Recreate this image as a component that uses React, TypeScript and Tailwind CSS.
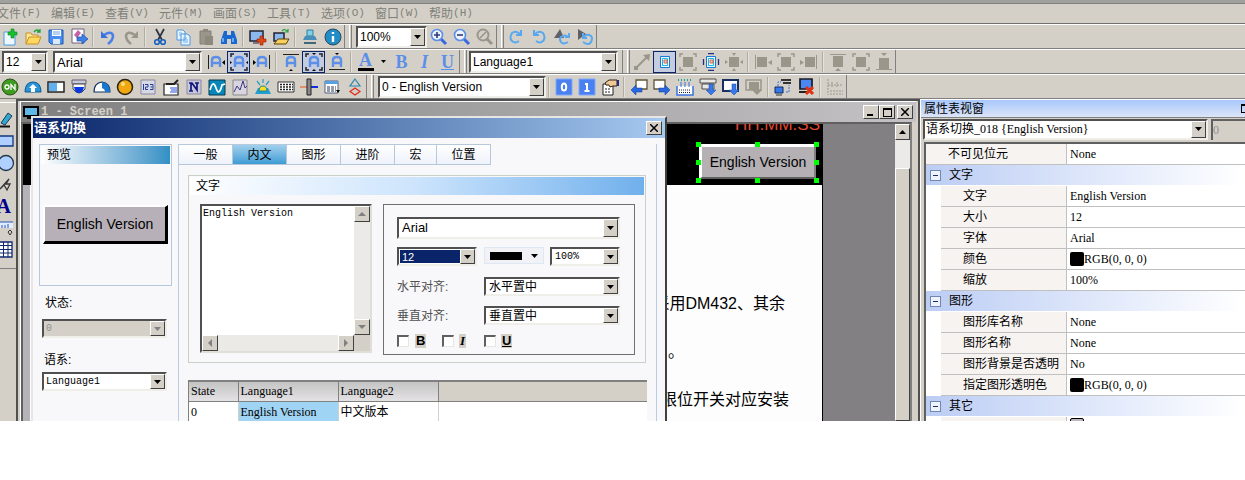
import { useState, type ReactNode } from 'react';

const SUNKEN = 'border-t-2 border-l-2 border-r border-b border-t-[#606060] border-l-[#606060] border-r-[#e8e6e0] border-b-[#e8e6e0]';
const RAISED = 'border border-t-white border-l-white border-r-[#404040] border-b-[#404040] bg-[#d4d0c8]';

const BLUE = '#5b8fe8';
const GREY = '#9a968a';

const corners = (c: string) => (
  <path d="M1 4V1h3M14 1h3v3M17 14v3h-3M4 17H1v-3" fill="none" stroke={c} strokeWidth="1.5" />
);
const letterA = (
  <path d="M5 14V7q0-3 4-3t4 3v7M5 10h8" fill="none" stroke={BLUE} strokeWidth="2.4" />
);
const page = (
  <>
    <path d="M4.500 3.500h9v11h-9z" fill="#e8f8ff" stroke="#1878d8" />
    <path d="M6.500 5.500h5v7h-5z" fill="#fff" stroke="#18b8e8" />
    <path d="M8 7h3v3H8z" fill="#f8c8b0" stroke="#e06040" />
  </>
);

// every drawing uses an 18x18 box
const ICONS: Record<string, ReactNode> = {
  new: (
    <>
      <path d="M3 4h11v13H3z" fill="#eef6ff" stroke="#4aa0d8" />
      <path d="M10 1h3v3h3v3h-3v3h-3V7H7V4h3z" fill="#18c030" stroke="#0a8a20" strokeWidth=".6" />
    </>
  ),
  open: (
    <>
      <path d="M2 16V5h5l1 2h6v2" fill="#ffe9a0" stroke="#c89020" />
      <path d="M2 16l3-7h12l-3 7z" fill="#ffd860" stroke="#c89020" />
      <path d="M10 4q3-4 6 0M16 1v3h-3" fill="none" stroke="#20a040" strokeWidth="1.3" />
    </>
  ),
  save: (
    <>
      <path d="M2 2h14v14H4l-2-2z" fill="#4a8cf0" stroke="#1858b8" />
      <path d="M5 2h9v6H5z" fill="#fff" />
      <path d="M6 4h7M6 6h7" stroke="#70a0e0" />
      <path d="M6 11h7v5H6z" fill="#d8e8ff" />
    </>
  ),
  saveAs: (
    <>
      <path d="M2 1h12v14H2z" fill="#fff" stroke="#706080" />
      <path d="M4 7l4-5 3 3-4 5z" fill="#c860a8" />
      <path d="M7 9h5V6l6 5-6 5v-3H7z" fill="#3f80e8" stroke="#1c4ca0" strokeWidth=".7" />
    </>
  ),
  undo: (
    <>
      <path d="M5 7q8-5 9 1 0 4-5 8" fill="none" stroke="#4a80e8" strokeWidth="2.600" />
      <path d="M2 3v7h7z" fill="#3a70e0" />
    </>
  ),
  redo: (
    <>
      <path d="M13 7q-8-5-9 1 0 4 5 8" fill="none" stroke={GREY} strokeWidth="2.600" />
      <path d="M16 3v7H9z" fill={GREY} />
    </>
  ),
  cut: (
    <>
      <path d="M5 1l6 11M13 1L7 12" stroke="#303848" strokeWidth="1.8" />
      <circle cx="6" cy="14" r="2.300" fill="none" stroke="#1860c0" strokeWidth="1.6" />
      <circle cx="12" cy="14" r="2.300" fill="none" stroke="#1860c0" strokeWidth="1.6" />
    </>
  ),
  copy: (
    <>
      <path d="M3 2h6l2 2v8H3zM7 6h6l3 2v9H7z" fill="#eaf4ff" stroke="#4a98e0" />
      <path d="M5 5h3M5 7h2M9 10h4M9 12h5M9 14h5" stroke="#70b0f0" />
    </>
  ),
  paste: (
    <>
      <path d="M3 3h11v13H3z" fill={GREY} stroke="#858074" />
      <path d="M6 1h5v3H6zM8 8h8v9H8z" fill="#8e897d" />
    </>
  ),
  find: (
    <>
      <path d="M4 3h3v4h4V3h3l3 9v4h-6v-5H7v5H1v-4z" fill="#1868d0" />
      <path d="M3 10v4M13 10v4" stroke="#80c0ff" strokeWidth="1.5" />
    </>
  ),
  screenAdd: (
    <>
      <path d="M1 3h13v10H1z" fill="#8cb8f0" stroke="#202030" strokeWidth="1.5" />
      <path d="M4 15h6" stroke="#202030" />
      <path d="M11 8h3v3h3v3h-3v3h-3v-3H8v-3h3z" fill="#e04818" stroke="#901800" strokeWidth=".6" />
    </>
  ),
  screenOpen: (
    <>
      <path d="M2 5h10v8H2z" fill="#8cb8f0" stroke="#202030" strokeWidth="1.500" />
      <path d="M2 16l4-5h11l-3 5z" fill="#f8d060" stroke="#604000" />
      <path d="M10 3q3-3 6 1M16 1v3h-3" fill="none" stroke="#20a040" strokeWidth="1.2" />
    </>
  ),
  print: (
    <>
      <path d="M6 2h6v6H6z" fill="#80d0e8" stroke="#3080a0" />
      <path d="M4 8h10l2 4H2z" fill="#4890b8" />
      <path d="M3 15h12" stroke="#406878" strokeWidth="2" />
    </>
  ),
  info: (
    <>
      <circle cx="9" cy="9" r="8" fill="#208cc8" stroke="#304858" />
      <path d="M9 4v2M9 8v6" stroke="#fff" strokeWidth="2.4" />
    </>
  ),
  zoomIn: (
    <>
      <path d="M11 11l5 5" stroke="#3868e0" strokeWidth="3" />
      <circle cx="7" cy="7" r="5.500" fill="#eef4ff" stroke={BLUE} strokeWidth="1.6" />
      <path d="M4 7h6M7 4v6" stroke="#303878" strokeWidth="1.6" />
    </>
  ),
  zoomOut: (
    <>
      <path d="M11 11l5 5" stroke="#3868e0" strokeWidth="3" />
      <circle cx="7" cy="7" r="5.500" fill="#eef4ff" stroke={BLUE} strokeWidth="1.6" />
      <path d="M4 7h6" stroke="#303878" strokeWidth="1.6" />
    </>
  ),
  zoomOff: (
    <>
      <path d="M11 11l5 5" stroke={GREY} strokeWidth="3" />
      <circle cx="7" cy="7" r="5.500" fill="none" stroke={GREY} strokeWidth="2" />
      <path d="M4 10l6-6" stroke={GREY} strokeWidth="1.6" />
    </>
  ),
  rotateCw: (
    <path d="M12 13q-4 3-7 0t0-8q4-3 8 1M14 2v5H9" fill="none" stroke="#58a8f0" strokeWidth="2" />
  ),
  rotateCcw: (
    <path d="M6 13q4 3 7 0t0-8Q9 2 5 6M4 2v5h5" fill="none" stroke="#58a8f0" strokeWidth="2" />
  ),
  flipA: (
    <>
      <path d="M1 10l6-9 4 9z" fill="#606068" />
      <path d="M15 14q-5 3-7 0t0-5q4-3 7 0M16 5v4h-4" fill="none" stroke="#58a8f0" strokeWidth="2" />
    </>
  ),
  flipB: (
    <>
      <path d="M2 1l8 5-8 6z" fill="#606068" />
      <path d="M7 14q6 4 8 0t0-6q-4-3-7 1M7 5v5h4" fill="none" stroke="#58a8f0" strokeWidth="2" />
    </>
  ),
  alignL: <>{letterA}<path d="M1.500 2v14" stroke="#222" /><path d="M18 7v5l-3-2.500z" /></>,
  alignC: <>{letterA}{corners('#222')}<path d="M0 8v3l2-1.500zM18 8v3l-2-1.500z" /></>,
  alignR: <>{letterA}<path d="M16.500 2v14" stroke="#222" /><path d="M0 7v5l3-2.500z" /></>,
  alignT: <>{letterA}<path d="M1 1.500h16" stroke="#222" /><path d="M7 18h4l-2-2z" /></>,
  alignM: <>{letterA}{corners('#222')}<path d="M7 0h4L9 2zM7 18h4l-2-2z" /></>,
  alignB: <>{letterA}<path d="M1 16.500h16" stroke="#222" /><path d="M7 0h4L9 2z" /></>,
  line: (
    <>
      <path d="M3 15L14 4" stroke={GREY} strokeWidth="2" />
      <path d="M17 1l-1 7-6-6zM1 13h4v4H1z" fill={GREY} />
    </>
  ),
  fit: page,
  boxCorners: <>{corners(GREY)}<path d="M4 4h10v10H4z" fill={GREY} /></>,
  fitSel: <>{page}<path d="M6 .5h6M6 17.500h6M1.500 6v6M16.500 6v6" stroke="#203080" strokeWidth="1.300" /></>,
  boxArrows: (
    <path d="M4 4h10v10H4zM7 0h4L9 3zM7 18h4l-2-3zM0 7v4l3-2zM18 7v4l-3-2z" fill={GREY} />
  ),
  objL: <path d="M1 2h1v14H1zM3 4h10v10H3zM18 7v5l-4-2.500z" fill={GREY} />,
  objC: <>{corners(GREY)}<path d="M4 4h10v10H4z" fill={GREY} /></>,
  objR: <path d="M16 2h1v14h-1zM5 4h10v10H5zM0 7v5l4-2.500z" fill={GREY} />,
  objT: <path d="M1 1h16v1H1zM4 3h10v11H4zM6 18h6l-3-3z" fill={GREY} />,
  objM: <>{corners(GREY)}<path d="M4 4h10v10H4z" fill={GREY} /></>,
  objB: <path d="M1 16h16v1H1zM4 5h10v11H4zM6 0h6L9 3z" fill={GREY} />,
  on: (
    <>
      <circle cx="9" cy="9" r="8" fill="#3f9a20" stroke="#305020" />
      <circle cx="6" cy="9" r="2" fill="none" stroke="#fff" strokeWidth="1.300" />
      <path d="M10 12V6.500l4 5V6" fill="none" stroke="#fff" strokeWidth="1.300" />
    </>
  ),
  goto: (
    <>
      <path d="M1 14q0-10 8-10t8 10z" fill="#2894d8" stroke="#105890" />
      <path d="M9 6l4 4h-2v4H7v-4H5z" fill="#fff" />
    </>
  ),
  bar: (
    <>
      <path d="M1 4h16v10H1z" fill="#fff" stroke="#222" strokeWidth="1.500" />
      <path d="M2 5h8v8H2z" fill="#60b0f0" />
    </>
  ),
  tank: (
    <>
      <path d="M2 2h14v4H2z" fill="#c8c8d8" stroke="#606070" />
      <path d="M3 6h12v5q-6 8-12 0z" fill="#fff" stroke="#444" />
      <path d="M4 9h10q-1 6-5 6t-5-6z" fill="#0838e0" />
    </>
  ),
  gauge: (
    <>
      <path d="M1 14q0-9 8-10 8 1 8 10z" fill="#fff" stroke="#103060" strokeWidth="1.200" />
      <path d="M9 4q8 1 8 10h-5q0-3-3-4z" fill="#1878d0" />
    </>
  ),
  lamp: (
    <>
      <circle cx="9" cy="9" r="7.500" fill="#f0a810" stroke="#282010" strokeWidth="1.500" />
      <circle cx="7" cy="6" r="2" fill="#ffe080" />
    </>
  ),
  num: (
    <>
      <path d="M2 2h14v14H2z" fill="#d8d8e4" stroke="#88889c" />
      <path d="M4.500 6v6M6 6.500h3v2.500H6.500v2.500H9M11 6.500h3v5h-3M11.500 9h2" fill="none" stroke="#2040a0" />
    </>
  ),
  input: (
    <>
      <path d="M2 6h14v11H2z" fill="#fff" stroke="#222" strokeWidth="1.200" />
      <path d="M4 6h8l4-4" stroke="#222" strokeWidth="2" fill="none" />
      <path d="M8 10h7M9 12h6M8 14h7" stroke="#2850e0" />
    </>
  ),
  name: (
    <>
      <path d="M2 2h14v14H2z" fill="#c8c8d8" stroke="#8888a0" />
      <path d="M4 5h3l5 7V5M4 13h4M6 5v8M10 5h4" stroke="#101880" strokeWidth="1.700" fill="none" />
    </>
  ),
  trend: (
    <>
      <path d="M1 2h16v15H1z" fill="#0888b8" stroke="#053850" />
      <path d="M2 12q3-11 6-2t6-3l3-1" fill="none" stroke="#fff" strokeWidth="1.700" />
    </>
  ),
  xy: (
    <>
      <path d="M2 2h14v15H2z" fill="#d8d4e0" stroke="#888" />
      <path d="M3 14l3-6 3 4 3-9 2 7 2-2" fill="none" stroke="#383880" />
    </>
  ),
  alarm: (
    <>
      <path d="M1 16l3-6h10l3 6z" fill="#20a0d0" />
      <path d="M5 13q0-5 4-5t4 5z" fill="#f8e020" stroke="#208090" />
      <path d="M9 1v4M3 3l3 4M15 3l-3 4" stroke="#30a0c0" strokeWidth="1.300" />
    </>
  ),
  keys: (
    <>
      <path d="M1 4h16v10H1z" fill="#fff" stroke="#333" />
      <path d="M3 6.500h13M3 9h13M3 11.500h13" stroke="#222" strokeWidth="1.400" strokeDasharray="2 1" />
    </>
  ),
  slider: (
    <>
      <path d="M0 8h7v2H0z" fill="#e09070" />
      <path d="M11 8h7v2h-7z" fill="#1030e0" />
      <path d="M7 1h4v16H7z" fill="#888" stroke="#222" />
    </>
  ),
  sheet: (
    <>
      <path d="M2 3h13v12H2z" fill="#fff" stroke="#506080" />
      <path d="M2 3h13v3H2z" fill="#58a0e0" />
      <path d="M4 9h9M4 11h9M4 13h9" stroke="#303850" strokeDasharray="3 1" />
      <path d="M13 12h4l-2 3z" />
    </>
  ),
  shapes: (
    <>
      <path d="M9 1l5 7H4z" fill="none" stroke="#2888b0" strokeWidth="1.200" />
      <path d="M9 10l5 3.500-5 3.500-5-3.500z" fill="none" stroke="#e02818" strokeWidth="1.200" />
    </>
  ),
  state0: (
    <>
      <path d="M1 1h16v16H1z" fill="#4a80f0" stroke="#80a8f8" />
      <ellipse cx="9" cy="9" rx="2.200" ry="3.500" fill="none" stroke="#fff" strokeWidth="2" />
    </>
  ),
  state1: (
    <>
      <path d="M1 1h16v16H1z" fill="#4a80f0" stroke="#80a8f8" />
      <path d="M7 6h2v7M6.500 13h5" fill="none" stroke="#fff" strokeWidth="2" />
    </>
  ),
  props: (
    <>
      <path d="M2 6h10v11H2z" fill="#fff" stroke="#222" />
      <path d="M4 11h6M4 14h6" stroke="#222" strokeDasharray="2 1" />
      <path d="M4 5l4-3h8v6h-4l-3 1-1-2H5z" fill="#f0c898" stroke="#302010" />
      <path d="M16 2h2v6h-2z" fill="#203080" />
    </>
  ),
  prev: (
    <>
      <path d="M6 2h11v9H6z" fill="#fff" stroke="#605838" strokeWidth="1.300" />
      <path d="M1 12l5-5v3h6v4H6v3z" fill="#2868e0" stroke="#103890" strokeWidth=".5" />
    </>
  ),
  next: (
    <>
      <path d="M1 2h11v9H1z" fill="#fff" stroke="#605838" strokeWidth="1.300" />
      <path d="M17 12l-5-5v3H6v4h6v3z" fill="#2868e0" stroke="#103890" strokeWidth=".5" />
    </>
  ),
  compile: (
    <>
      <path d="M1 8v9h16V8" fill="#fff" stroke="#3870e0" strokeWidth="1.500" />
      <path d="M2 2h15" stroke="#20a090" strokeWidth="2" strokeDasharray="1 2" />
      <path d="M5 4v5M9 4v5M13 4v5" stroke="#3870e0" />
      <path d="M3 12h12M3 14.500h12" stroke="#223" strokeDasharray="1 1" />
    </>
  ),
  download: (
    <>
      <path d="M1 1h16v4H1zM3 6h12v5H3z" fill="#e8e8e8" stroke="#504c44" />
      <path d="M10 6h4v6h3l-5 5-5-5h3z" fill="#3878e8" stroke="#1848a0" strokeWidth=".5" />
    </>
  ),
  downloadScreen: (
    <>
      <path d="M1 2h15v11H1z" fill="#fff" stroke="#183060" strokeWidth="2" />
      <path d="M10 6h4v6h3l-5 5-5-5h3z" fill="#3878e8" stroke="#1848a0" strokeWidth=".5" />
    </>
  ),
  downloadOff: (
    <>
      <path d="M1 2h15v10H1z" fill="none" stroke={GREY} strokeWidth="1.500" />
      <path d="M4 4h10v8h3l-5 5-5-5H4z" fill={GREY} />
    </>
  ),
  online: (
    <>
      <path d="M7 2h10M9 5h8" stroke="#333" strokeWidth="2" />
      <path d="M4 8V4h3M12 14h3V7" fill="none" stroke="#3870e0" strokeDasharray="2 1" />
      <path d="M1 9h8v6H1z" fill="#3878e8" stroke="#102860" />
      <path d="M2 17h6" stroke="#333" />
    </>
  ),
  offline: (
    <>
      <path d="M3 1h12v10H3z" fill="#4888f0" stroke="#181828" strokeWidth="1.700" />
      <path d="M2 14h9" stroke="#222" strokeWidth="2" />
      <path d="M9 9l7 7M16 9l-7 7" stroke="#e03010" strokeWidth="3" />
    </>
  ),
  ruler: (
    <path d="M2 1v16M6 4v6M11 4v6M2 7h14M4 13h13M4 16h13" stroke={GREY} strokeDasharray="2 1" fill="none" />
  ),
  pencil: (
    <>
      <path d="M4 13l7-10 4 3-7 9z" fill="#30a8d0" stroke="#203850" />
      <path d="M1 16.500h12" stroke="#111" strokeWidth="2" />
    </>
  ),
  rect: <path d="M2 4h14v10H2z" fill="#b0d0ff" stroke="#103880" strokeWidth="1.300" />,
  circle: <circle cx="9" cy="9" r="7.500" fill="#b0d0ff" stroke="#203850" strokeWidth="1.300" />,
  poly: <path d="M3 14l9-10-3 5h4l-3 6-3-5z" fill="none" stroke="#333" strokeWidth="1.300" />,
  scale: (
    <>
      <path d="M0 3h16v6H0z" fill="#e0ecff" />
      <path d="M0 3h16M5 9V6M8 9V6M11 9V5" stroke="#2858b0" />
      <path d="M13 11l2 2-2 3-2-3z" fill="none" stroke="#333" />
    </>
  ),
  grid: (
    <>
      <path d="M2 1h13v15H2z" fill="#fff" stroke="#102870" strokeWidth="1.300" />
      <path d="M2 4.500h13M2 8.500h13M2 12h13M6.500 1v15M11 1v15" stroke="#102870" />
    </>
  ),
};

function Icon({ name }: { name: string }) {
  return (
    <svg viewBox="0 0 18 18" className="size-[18px] shrink-0" aria-hidden="true">
      {ICONS[name]}
    </svg>
  );
}

// "|" in a list is a thin divider, a leading "*" marks a pressed button
function Tools({ items }: { items: string }) {
  return (
    <>
      {items.split(' ').map((item, i) => {
        if (item === '|') {
          return <span key={i} className="mx-[2px] h-5 w-[2px] border-r border-l border-r-[#e4e2dc] border-l-[#b0aca0]" />;
        }
        const pressed = item.startsWith('*');
        const name = pressed ? item.slice(1) : item;
        return (
          <button
            key={i}
            type="button"
            aria-label={name}
            className={
              pressed
                ? 'flex h-[22px] w-[23px] items-center justify-center border border-[#0a246a] bg-[#c4cce0]'
                : 'flex h-[22px] w-[23px] items-center justify-center'
            }
          >
            <Icon name={name} />
          </button>
        );
      })}
    </>
  );
}

function Grip() {
  return (
    <span className="flex h-full w-2 justify-end gap-[2px] border-l border-[#808080]">
      <span className="h-full w-[3px] border-r border-l border-r-[#808080] border-l-white" />
    </span>
  );
}

interface ComboProps {
  id: string;
  label?: string;
  options: string[];
  className: string;
  textClass?: string;
  disabled?: boolean;
}

function Combo({ id, label, options, className, textClass = 'pl-1 text-xs', disabled }: ComboProps) {
  return (
    <div className={`relative shrink-0 border-2 border-t-[#505050] border-r-[#f0eee8] border-b-[#f0eee8] border-l-[#505050] ${disabled ? 'bg-[#d4d0c8]' : 'bg-white'} ${className}`}>
      <select
        id={id}
        aria-label={label}
        disabled={disabled}
        className={`block h-full w-full appearance-none pr-4 outline-none disabled:text-[#909090] disabled:opacity-100 ${textClass}`}
      >
        {options.map(o => (
          <option key={o}>{o}</option>
        ))}
      </select>
      <span className={`pointer-events-none absolute inset-y-0 right-0 flex w-[15px] items-center justify-center ${RAISED}`}>
        <svg viewBox="0 0 7 4" className="h-1 w-[7px]">
          <path d="M0 0h7L3.500 4z" fill={disabled ? '#808080' : '#000'} />
        </svg>
      </span>
    </div>
  );
}

const MENU = [
  ['文件', 'F'],
  ['编辑', 'E'],
  ['查看', 'V'],
  ['元件', 'M'],
  ['画面', 'S'],
  ['工具', 'T'],
  ['选项', 'O'],
  ['窗口', 'W'],
  ['帮助', 'H'],
];

function Toolbars() {
  return (
    <header>
      <div className="h-1 border-b border-[#808080] bg-[#a0a09c]" />
      <nav className="flex h-5 items-center border-b border-[#707070] text-xs text-[#808078]">
        {MENU.map(([text, key]) => (
          <button key={key} type="button" className="flex w-[54px] shrink-0 items-center whitespace-nowrap first:-ml-[3px]">
            {text}
            <span className="font-['Liberation_Mono'] text-[11px]">({key})</span>
          </button>
        ))}
      </nav>

      {/* Standard */}
      <div className="flex h-[25px] border-t border-b border-t-white border-b-[#808080]">
        <div className="flex items-center border-r border-[#808080]">
          <span className="-ml-[2px]" />
          <Tools items="new open save saveAs | undo redo | cut copy paste find | screenAdd screenOpen | print info" />
          <Grip />
          <span className="w-1" />
          <Combo id="zoom" label="Zoom" options={['100%']} className="h-[22px] w-[71px]" textClass="pl-[2px] text-xs" />
          <Tools items="zoomIn zoomOut zoomOff" />
          <Grip />
          <Tools items="rotateCw rotateCcw flipA flipB" />
        </div>
      </div>

      {/* Text format */}
      <div className="flex h-[25px] border-t border-b border-t-white border-b-[#808080]">
        <div className="flex items-center border-r border-[#808080]">
          <Combo id="tb-size" label="Size" options={['12']} className="ml-[2px] h-[22px] w-[46px]" textClass="pl-[2px] text-xs" />
          <span className="w-[5px]" />
          <Combo id="tb-font" label="Font" options={['Arial']} className="h-[22px] w-[149px]" textClass="pl-[2px] text-[13px]" />
          <span className="w-[2px]" />
          <Tools items="alignL *alignC alignR | alignT *alignM alignB |" />
          <button type="button" className="flex w-[23px] flex-col items-center font-['Liberation_Serif'] text-lg leading-4 font-bold text-[#5b8fe8]">
            A
            <span className="h-[3px] w-4 bg-black" />
          </button>
          <button type="button" aria-label="Text colour" className="flex w-[13px] justify-center">
            <svg viewBox="0 0 5 3" className="h-[3px] w-[5px]"><path d="M0 0h5L2.500 3z" /></svg>
          </button>
          <button type="button" className="w-[23px] font-['Liberation_Serif'] text-lg leading-5 font-bold text-[#5b8fe8]">B</button>
          <button type="button" className="w-[23px] font-['Liberation_Serif'] text-lg leading-5 font-bold text-[#5b8fe8] italic">I</button>
          <button type="button" className="w-[23px] font-['Liberation_Serif'] text-lg leading-5 font-bold text-[#5b8fe8] underline">U</button>
          <Grip />
          <span className="w-[2px]" />
          <Combo id="tb-lang" label="Language" options={['Language1', 'Language2']} className="h-[22px] w-[149px]" textClass="pl-[2px] text-xs" />
          <span className="w-1" />
          <Grip />
          <Tools items="line *fit boxCorners fitSel boxArrows | objL objC objR | objT objM objB" />
        </div>
      </div>

      {/* Elements */}
      <div className="flex h-[25px] border-t border-b border-t-white border-b-[#808080]">
        <div className="flex items-center border-r border-[#808080]">
          <span className="-ml-[2px]" />
          <Tools items="on goto bar tank gauge lamp num input name trend xy alarm keys slider sheet shapes" />
          <Grip />
          <span className="w-1" />
          <Combo id="tb-state" label="State" options={['0 - English Version']} className="h-[22px] w-[168px]" textClass="pl-[2px] text-xs" />
          <Tools items="| state0 state1 props | prev next compile download downloadScreen downloadOff | online offline | ruler" />
        </div>
      </div>
    </header>
  );
}

function Palette() {
  return (
    <aside className="w-4 shrink-0 overflow-hidden pt-[3px]">
      <div className="-ml-[5px] flex h-[167px] flex-col items-center justify-between border-t border-b border-t-white border-b-[#808080] pt-2 pb-[10px]">
        {['pencil', 'rect', 'circle', 'poly', 'text', 'scale', 'grid'].map(name => (
          <button key={name} type="button" aria-label={name} className="flex h-4 w-[18px] items-center">
            {name === 'text' ? (
              <span className="font-['Liberation_Serif'] text-xl leading-4 font-bold text-[#00008b]">A</span>
            ) : (
              <Icon name={name} />
            )}
          </button>
        ))}
      </div>
    </aside>
  );
}

const HANDLES = [
  '-left-[6px] -top-[5px]',
  'left-[53px] -top-[5px]',
  '-right-[5px] -top-[5px]',
  '-left-[6px] top-[13px]',
  '-right-[5px] top-[13px]',
  '-left-[6px] -bottom-[6px]',
  'left-[53px] -bottom-[6px]',
  '-right-[5px] -bottom-[6px]',
];

function ScreenWindow() {
  return (
    <main className="flex min-w-0 flex-1 flex-col border-t-2 border-r-2 border-l-2 border-[#505050] px-[2px]">
      <div className="flex min-h-0 flex-1 flex-col border-t border-l border-white">
        <div className="flex h-5 shrink-0 items-center gap-[2px] bg-linear-to-r from-[#808080] to-[#c4c2c4] pr-[3px] pl-[2px]">
          <svg viewBox="0 0 16 13" className="h-[13px] w-4" aria-hidden="true">
            <path d="M1 1h14v9H1z" fill="#60b8e8" stroke="#000" strokeWidth="2" />
            <path d="M4 12h8" stroke="#000" strokeWidth="2" />
          </svg>
          <span className="flex-1 font-['Liberation_Mono'] text-xs font-bold text-[#d4d0c8]">1 - Screen 1</span>
          <button type="button" aria-label="Minimize" className={`flex h-[14px] w-4 items-end pb-[2px] pl-[3px] ${RAISED}`}>
            <span className="h-[2px] w-[6px] bg-black" />
          </button>
          <button type="button" aria-label="Maximize" className={`-ml-[2px] flex h-[14px] w-4 items-center justify-center ${RAISED}`}>
            <span className="h-[9px] w-[9px] border border-t-2 border-black" />
          </button>
          <button type="button" aria-label="Close" className={`flex h-[14px] w-4 items-center justify-center ${RAISED}`}>
            <svg viewBox="0 0 8 8" className="size-2"><path d="M0 0l8 8M8 0L0 8" stroke="#000" strokeWidth="1.500" /></svg>
          </button>
        </div>

        <div className="mr-1 flex min-h-0 flex-1 border-2 border-b-0 border-t-[#606060] border-r-[#808080] border-l-[#606060]">
          {/* Canvas */}
          <div className="flex w-[800px] shrink-0 flex-col border-r border-black text-right text-base">
            <div className="relative h-[61px] shrink-0 overflow-hidden bg-black">
              <div className="absolute -top-[9px] right-[2px] text-[17px] leading-5 text-[#e04830]">HH:MM:SS</div>
              <div className="absolute top-5 right-[6px] flex h-[35px] w-[117px] items-center justify-center border-t-[3px] border-r-2 border-b-2 border-l-[3px] border-t-white border-r-[#808080] border-b-[#606060] border-l-white bg-[#b4b0b4] text-sm text-black">
                English Version
                {HANDLES.map(pos => (
                  <span key={pos} className={`absolute h-[5px] w-[5px] bg-[#00ff00] ${pos}`} />
                ))}
              </div>
            </div>
            <div className="flex-1 border-l-[7px] border-[#b4b4b8] bg-[#fdfdfd] pt-[107px] leading-6">
              <p className="pr-[37px]">采用DM432、其余</p>
              <p className="mt-6 pr-[138px]">。</p>
              <p className="mt-6 pr-[33px]">限位开关对应安装</p>
            </div>
          </div>
          <div className="flex-1 bg-[#828082]" />
          <div className="flex w-[15px] shrink-0 flex-col bg-[#eceae6]">
            <button type="button" aria-label="Scroll up" className={`flex h-4 items-center justify-center ${RAISED}`}>
              <svg viewBox="0 0 7 4" className="h-1 w-[7px]"><path d="M0 4h7L3.500 0z" /></svg>
            </button>
            <div className={`mt-7 flex-1 ${RAISED}`} />
          </div>
        </div>
      </div>
    </main>
  );
}

const TABS = ['一般', '内文', '图形', '进阶', '宏', '位置'];

function ScrollButton({ label, d }: { label: string; d: string }) {
  return (
    <button type="button" aria-label={label} className={`flex size-4 shrink-0 items-center justify-center ${RAISED}`}>
      <svg viewBox="0 0 8 8" className="size-2"><path d={d} fill="#808080" /></svg>
    </button>
  );
}

function LanguageDialog() {
  const [tab, setTab] = useState('内文');
  const [text, setText] = useState('English Version');

  return (
    <section className="absolute top-[17px] left-[31px] flex h-full w-[636px] flex-col border-t-2 border-r-2 border-l-2 border-t-[#e8e6e4] border-r-[#404040] border-l-[#e8e6e4] bg-[#f8f8fb]">
      <div className="flex h-5 shrink-0 items-center justify-between bg-linear-to-r from-[#0a246a] to-[#a6caf0] pr-[3px] pl-px">
        <h1 className="text-[13px] font-bold text-white">语系切换</h1>
        <button type="button" aria-label="Close" className={`flex h-[14px] w-4 items-center justify-center ${RAISED}`}>
          <svg viewBox="0 0 8 8" className="size-2"><path d="M0 0l8 8M8 0L0 8" stroke="#000" strokeWidth="1.500" /></svg>
        </button>
      </div>

      <div className="flex min-h-0 flex-1 pt-[6px] pr-2">
        {/* Preview */}
        <div className="w-[145px] shrink-0 pr-[6px] pl-[6px] text-xs">
          <div className="h-[142px] border border-[#b8c8dc] p-px">
            <h2 className="h-[18px] bg-linear-to-r from-white to-[#3090c4] pl-[6px] leading-[18px]">预览</h2>
            <div className="mt-[41px] ml-[2px] flex h-[39px] w-[125px] items-center justify-center border-t-2 border-r-[3px] border-b-[3px] border-l-2 border-t-white border-r-black border-b-black border-l-white bg-[#b8b0b8] text-sm">
              English Version
            </div>
          </div>
          <label htmlFor="dlg-state" className="mt-[7px] block pl-[6px] leading-5">状态:</label>
          <Combo id="dlg-state" options={['0']} disabled className="mt-[6px] ml-[3px] h-[19px] w-[125px]" textClass="pl-[2px] font-['Liberation_Mono'] text-[10px]" />
          <label htmlFor="dlg-lang" className="mt-3 block pl-[5px] leading-5">语系:</label>
          <Combo id="dlg-lang" options={['Language1', 'Language2']} className="mt-[2px] ml-[3px] h-[19px] w-[125px]" textClass="pl-[2px] font-['Liberation_Mono'] text-[10px]" />
        </div>

        {/* Tabs */}
        <div className="min-w-0 flex-1 border-r border-l border-[#b8cce4]">
          <div role="tablist" className="flex h-[21px] text-xs">
            {TABS.map(t => (
              <button
                key={t}
                type="button"
                role="tab"
                aria-selected={t === tab}
                onClick={() => setTab(t)}
                className={`border-t border-r border-b border-[#b8c8dc] ${t === '宏' ? 'w-[42px]' : 'w-[54px]'} ${
                  t === tab ? 'bg-linear-to-b from-[#a0d0ec] to-[#3c9cd4]' : 'bg-linear-to-b from-white to-[#eef2fa]'
                }`}
              >
                {t}
              </button>
            ))}
          </div>

          <div className="mt-[10px] mr-[10px] ml-[9px] h-[188px] border border-[#c8d0c8] p-px">
            <h2 className="h-[18px] bg-linear-to-r from-white via-[#cce4fc] to-[#70b0ec] pl-[6px] text-xs leading-[18px]">文字</h2>
            <div className="flex gap-[11px] pt-[9px] pl-[10px]">
              <div className="grid h-[149px] w-[172px] grid-cols-[1fr_16px] grid-rows-[1fr_16px] border-2 border-t-[#505050] border-r-[#e0ded8] border-b-[#e0ded8] border-l-[#505050] bg-white">
                <textarea
                  aria-label="文字"
                  value={text}
                  onChange={e => setText(e.target.value)}
                  className="resize-none overflow-hidden px-px pt-px font-['Liberation_Mono'] text-[10px] leading-[14px] outline-none"
                />
                <div className="flex flex-col justify-between bg-[#eceae6]">
                  <ScrollButton label="Up" d="M0 6h8L4 2z" />
                  <ScrollButton label="Down" d="M0 2h8L4 6z" />
                </div>
                <div className="flex justify-between bg-[#eceae6]">
                  <ScrollButton label="Left" d="M6 0v8L2 4z" />
                  <ScrollButton label="Right" d="M2 0v8l4-4z" />
                </div>
                <div className="bg-[#d4d0c8]" />
              </div>

              <div className="h-[151px] w-[252px] border border-[#707070] px-[13px] pt-3 text-xs">
                <Combo id="dlg-font" label="字体" options={['Arial']} className="h-[22px] w-[223px]" textClass="pl-[3px] text-[13px]" />
                <div className="mt-2 flex w-[223px] justify-between">
                  <Combo id="dlg-size" label="大小" options={['12']} className="h-[19px] w-20" textClass="border border-white bg-[#0a246a] pl-[2px] text-[11px] text-white" />
                  <button type="button" aria-label="颜色" className="flex h-[17px] w-[60px] items-center gap-[9px] border border-[#dce8f4] bg-[#f2f2f6] pl-[5px]">
                    <span className="h-2 w-8 bg-black" />
                    <svg viewBox="0 0 7 4" className="h-1 w-[7px]"><path d="M0 0h7L3.500 4z" /></svg>
                  </button>
                  <Combo id="dlg-zoom" label="缩放" options={['100%']} className="h-[19px] w-[70px]" textClass="pl-[3px] font-['Liberation_Mono'] text-[10px]" />
                </div>
                <div className="mt-[11px] flex w-[223px] items-center justify-between">
                  <label htmlFor="halign" className="text-[#505050]">水平对齐:</label>
                  <Combo id="halign" options={['水平置中']} className="h-[19px] w-[136px]" textClass="pl-[3px] text-xs" />
                </div>
                <div className="mt-[10px] flex w-[223px] items-center justify-between">
                  <label htmlFor="valign" className="text-[#505050]">垂直对齐:</label>
                  <Combo id="valign" options={['垂直置中']} className="h-[19px] w-[136px]" textClass="pl-[3px] text-xs" />
                </div>
                <div className="mt-[9px] flex items-center">
                  {['B', 'I', 'U'].map(k => (
                    <label
                      key={k}
                      className={`flex items-center ${k === 'B' ? 'w-[45px] gap-[6px]' : k === 'I' ? 'w-[42px] gap-[5px]' : 'gap-[5px]'}`}
                    >
                      <input type="checkbox" className={`size-3 appearance-none bg-white ${SUNKEN}`} />
                      <span
                        className={`bg-[#d4d0c8] px-px text-[13px] leading-[14px] ${
                          k === 'B' ? 'font-black' : k === 'I' ? "font-['Liberation_Serif'] font-bold italic" : 'font-bold underline'
                        }`}
                      >
                        {k}
                      </span>
                    </label>
                  ))}
                </div>
              </div>
            </div>
          </div>

          <div className="mt-[17px] mr-[9px] ml-[9px] border-t-2 border-l border-[#808080] bg-white">
            <table className="w-full table-fixed border-collapse text-left font-['Liberation_Serif','Noto_Sans_CJK_SC',serif] text-xs">
              <thead>
                <tr className="h-[19px]">
                  {['State', 'Language1', 'Language2'].map(h => (
                    <th
                      key={h}
                      className={`border-r border-b border-[#808080] bg-linear-to-b from-[#c4c4c4] to-[#e4e2e4] px-[2px] py-0 font-normal ${
                        h === 'State' ? 'w-[49px]' : 'w-[100px]'
                      }`}
                    >
                      {h}
                    </th>
                  ))}
                  <th className="border-b border-[#808080] bg-[#d4d0c8] p-0" />
                </tr>
              </thead>
              <tbody>
                <tr className="h-[22px]">
                  <td className="border-r border-[#d4d0c8] px-[2px] py-0">0</td>
                  <td className="border-r border-[#d4d0c8] bg-[#a0d4f4] px-[2px] py-0">English Version</td>
                  <td className="border-r border-[#d4d0c8] px-[2px] py-0">中文版本</td>
                  <td />
                </tr>
              </tbody>
            </table>
          </div>
        </div>
      </div>
    </section>
  );
}

interface Row {
  label: string;
  value?: string;
  kind?: 'group' | 'color' | 'top';
}

const ROWS: Row[] = [
  { label: '不可见位元', value: 'None', kind: 'top' },
  { label: '文字', kind: 'group' },
  { label: '文字', value: 'English Version' },
  { label: '大小', value: '12' },
  { label: '字体', value: 'Arial' },
  { label: '颜色', value: 'RGB(0, 0, 0)', kind: 'color' },
  { label: '缩放', value: '100%' },
  { label: '图形', kind: 'group' },
  { label: '图形库名称', value: 'None' },
  { label: '图形名称', value: 'None' },
  { label: '图形背景是否透明', value: 'No' },
  { label: '指定图形透明色', value: 'RGB(0, 0, 0)', kind: 'color' },
  { label: '其它', kind: 'group' },
];

function PropertyPanel() {
  return (
    <aside className="flex w-[325px] shrink-0 flex-col overflow-hidden border-l border-white font-['Liberation_Serif','Noto_Sans_CJK_SC',serif] text-xs">
      <div className="flex h-[18px] shrink-0 items-center justify-between border-t border-white bg-linear-to-b from-[#a8c8fc] to-[#dce4f8] pl-[3px]">
        <h2>属性表视窗</h2>
        <span className="h-[9px] w-1 border border-t-2 border-r-0 border-black" />
      </div>
      <div className="flex h-[23px] shrink-0 items-center gap-[3px] border-t border-[#808080] pl-[2px]">
        <Combo id="element" label="元件" options={['语系切换_018 {English Version}']} className="h-[21px] w-[285px]" textClass="pl-px text-xs" />
        <input
          aria-label="状态"
          disabled
          value="0"
          readOnly
          className="h-[21px] min-w-0 flex-1 border-t-2 border-l-2 border-[#606060] bg-[#d4d0c8] text-[#909090]"
        />
      </div>
      <div className="mt-[2px] ml-[3px] border-t-2 border-l-2 border-[#606060] bg-white">
        <table className="w-full table-fixed border-separate border-spacing-0 text-left">
          <colgroup>
            <col className="w-[15px]" />
            <col className="w-[126px]" />
            <col />
          </colgroup>
          <tbody>
            {ROWS.map((row, i) => {
              if (row.kind === 'group') {
                return (
                  <tr key={i} className="h-[21px] bg-linear-to-r from-[#bccdf4] to-white">
                    <th colSpan={3} className="border-b border-white p-0 font-normal">
                      <span className="flex items-center gap-2 pl-1">
                        <button type="button" aria-label="Collapse" className="flex h-[11px] w-[11px] items-center justify-center border border-[#7088b0] bg-[#eef2fc]">
                          <span className="h-px w-[5px] bg-[#203060]" />
                        </button>
                        {row.label}
                      </span>
                    </th>
                  </tr>
                );
              }
              const top = row.kind === 'top';
              return (
                <tr key={i} className="h-[21px]">
                  {!top && <td className="p-0" />}
                  <th
                    colSpan={top ? 2 : 1}
                    className="border-r border-b border-[#c0c0c0] bg-[#f6f3f1] py-0 pr-0 pl-[22px] font-normal whitespace-nowrap"
                  >
                    {row.label}
                  </th>
                  <td className="border-b border-[#c0c0c0] py-0 pr-0 pl-[3px]">
                    <span className="flex items-center">
                      {row.kind === 'color' && <span className="size-[14px] rounded-xs bg-black" />}
                      {row.value}
                    </span>
                  </td>
                </tr>
              );
            })}
            <tr className="h-[21px] align-top">
              <td className="p-0" />
              <th className="border-r border-[#c0c0c0] bg-[#f6f3f1] p-0" />
              <td className="p-0 pl-[3px]">
                <span className="mt-px block size-[14px] rounded-xs border border-black bg-[#c0b8c0]" />
              </td>
            </tr>
          </tbody>
        </table>
      </div>
    </aside>
  );
}

export default function App() {
  return (
    <div className="min-h-screen bg-white font-['Liberation_Sans','Noto_Sans_CJK_SC',sans-serif] text-black">
      <div className="overflow-hidden bg-[#d4d0c8]">
        <Toolbars />
        <div className="relative flex h-[322px] overflow-hidden">
          <Palette />
          <ScreenWindow />
          <LanguageDialog />
          <PropertyPanel />
        </div>
      </div>
    </div>
  );
}
